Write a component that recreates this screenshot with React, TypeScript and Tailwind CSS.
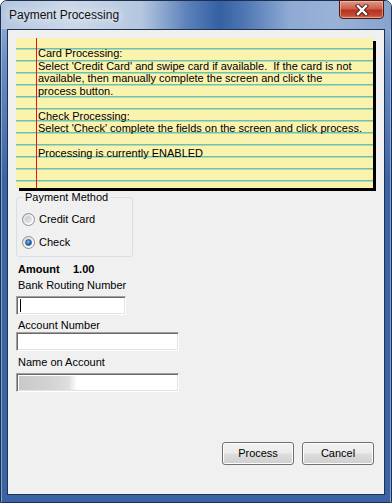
import React from "react";

const font = { fontFamily: '"Liberation Sans", Arial, sans-serif' };

function Radio({ checked, label }: { checked?: boolean; label: string }) {
  return (
    <div className="flex items-center h-[16px]">
      <div className="w-[13px] h-[13px] rounded-full border border-[#8c8f94] bg-[linear-gradient(135deg,#d9dadc,#f4f4f4_60%,#ffffff)] flex items-center justify-center">
        {checked ? (
          <div className="w-[7px] h-[7px] rounded-full bg-[radial-gradient(circle_at_40%_35%,#7fc0f0,#1d6bb5_55%,#0f4a86)] border border-[#2a5a8c]" />
        ) : (
          <div className="w-[7px] h-[7px] rounded-full bg-[linear-gradient(135deg,#c6c8cb,#e9eaeb)]" />
        )}
      </div>
      <span className="ml-[4px] text-[11px] leading-[13px] text-black">{label}</span>
    </div>
  );
}

function TextBox({ w, children }: { w: string; children?: React.ReactNode }) {
  return (
    <div
      className={`${w} h-[19px] ml-2 bg-white border border-t-[#a0a0a0] border-l-[#a0a0a0] border-r-white border-b-white shadow-[inset_1px_1px_0_#696969,inset_-1px_-1px_0_#e3e3e3] flex items-center pl-[2px]`}
    >
      {children}
    </div>
  );
}

function Button({ label }: { label: string }) {
  return (
    <div className="w-[72px] h-[23px] rounded-[3px] border border-[#707070] bg-[linear-gradient(180deg,#f2f2f2_0%,#ebebeb_48%,#dddddd_52%,#cfcfcf_100%)] shadow-[inset_0_0_0_1px_#fcfcfc] flex items-center justify-center text-[11px] text-black">
      {label}
    </div>
  );
}

export default function App() {
  return (
    <div
      style={font}
      className="w-[392px] h-[503px] rounded-t-[7px] border border-[#1e2f4c] bg-[linear-gradient(180deg,#a3bbdc_0px,#6a8fc5_60px,#3a64a6_180px,#3a63a5_100%)] flex flex-col"
    >
      {/* title bar */}
      <div className="h-[28px] rounded-t-[6px] flex items-start bg-[linear-gradient(90deg,#b3c6e0_0%,#ccd8e8_18%,#b4c7e0_36%,#5a80ba_48%,#3461a3_56%,#4d75b2_62%,#8faad3_74%,#99b3d8_86%,#87a3cd_100%)]">
        <div className="ml-[8px] mt-[7px] text-[12px] leading-[15px] text-[#111] [text-shadow:0_0_6px_#e8eef7,0_0_10px_#e8eef7]">
          Payment Processing
        </div>
        <div className="ml-auto mr-[7px] w-[45px] h-[19px] -mt-px rounded-b-[4px] border border-[#4b1a14] bg-[linear-gradient(180deg,#e09a88_0%,#cc5f4c_45%,#b8321f_55%,#c04a32_85%,#d87a5c_100%)] shadow-[inset_0_0_0_1px_rgba(255,210,200,0.5)] flex items-center justify-center">
          <svg width="14" height="12" viewBox="0 0 14 12">
            <path d="M3 2 L11 10 M11 2 L3 10" stroke="#4a1d16" strokeWidth="4.2" strokeLinecap="square" />
            <path d="M3 2 L11 10 M11 2 L3 10" stroke="#ffffff" strokeWidth="2.4" strokeLinecap="square" />
          </svg>
        </div>
      </div>

      {/* frame + client */}
      <div className="flex-1 px-[6px] pb-[7px] flex shadow-[inset_1px_0_0_rgba(180,205,235,0.6),inset_-1px_0_0_rgba(180,205,235,0.6)]">
        <div className="flex-1 border border-[#1f3150] bg-[#f0f0f0] flex flex-col">
          {/* note */}
          <div className="ml-2 mt-2 w-[357px] h-[150px] shadow-[3px_3px_0_#000] flex bg-[repeating-linear-gradient(180deg,#faf3ae_0px,#faf3ae_10px,#74c0a6_10px,#74c0a6_11px,#addab8_11px,#addab8_12px)]">
            <div className="w-[20px]" />
            <div className="w-px bg-[#e8141c]" />
            <div className="pl-[1px] pt-[9px] text-[11px] leading-[12.5px] text-black whitespace-pre">
              <div>Card Processing:</div>
              <div>{"Select 'Credit Card' and swipe card if available.  If the card is not"}</div>
              <div>available, then manually complete the screen and click the</div>
              <div>process button.</div>
              <div>&nbsp;</div>
              <div>Check Processing:</div>
              <div>{"Select 'Check' complete the fields on the screen and click process."}</div>
              <div>&nbsp;</div>
              <div>Processing is currently ENABLED</div>
            </div>
          </div>

          {/* payment method group */}
          <fieldset className="ml-2 mt-[3px] w-[117px] h-[66px] border border-[#d5dfe5] rounded-[3px] px-[5px]">
            <legend className="ml-[1px] px-[2px] text-[11px] leading-[13px] text-black">Payment Method</legend>
            <div className="mt-[7px]">
              <Radio label="Credit Card" />
            </div>
            <div className="mt-[7px]">
              <Radio checked label="Check" />
            </div>
          </fieldset>

          <div className="ml-[10px] mt-[6px] flex text-[11px] leading-[13px] font-bold text-black">
            <span className="w-[55px]">Amount</span>
            <span>1.00</span>
          </div>

          <div className="ml-[10px] mt-[3px] text-[11px] leading-[13px] text-black">Bank Routing Number</div>
          <div className="mt-[4px]">
            <TextBox w="w-[110px]">
              <div className="w-px h-[13px] bg-black ml-px" />
            </TextBox>
          </div>

          <div className="ml-[10px] mt-[4px] text-[11px] leading-[13px] text-black">Account Number</div>
          <TextBox w="w-[163px]" />

          <div className="ml-[10px] mt-[5px] text-[11px] leading-[13px] text-black">Name on Account</div>
          <div className="mt-[4px]">
            <TextBox w="w-[163px]">
              <div className="w-[58px] h-[14px] bg-[linear-gradient(90deg,#c9c9c9_0%,#d2d2d2_50%,#dedede_85%,#ffffff_100%)]" />
            </TextBox>
          </div>

          <div className="mt-[50px] mr-[10px] flex justify-end gap-[8px]">
            <Button label="Process" />
            <Button label="Cancel" />
          </div>
        </div>
      </div>
    </div>
  );
}
